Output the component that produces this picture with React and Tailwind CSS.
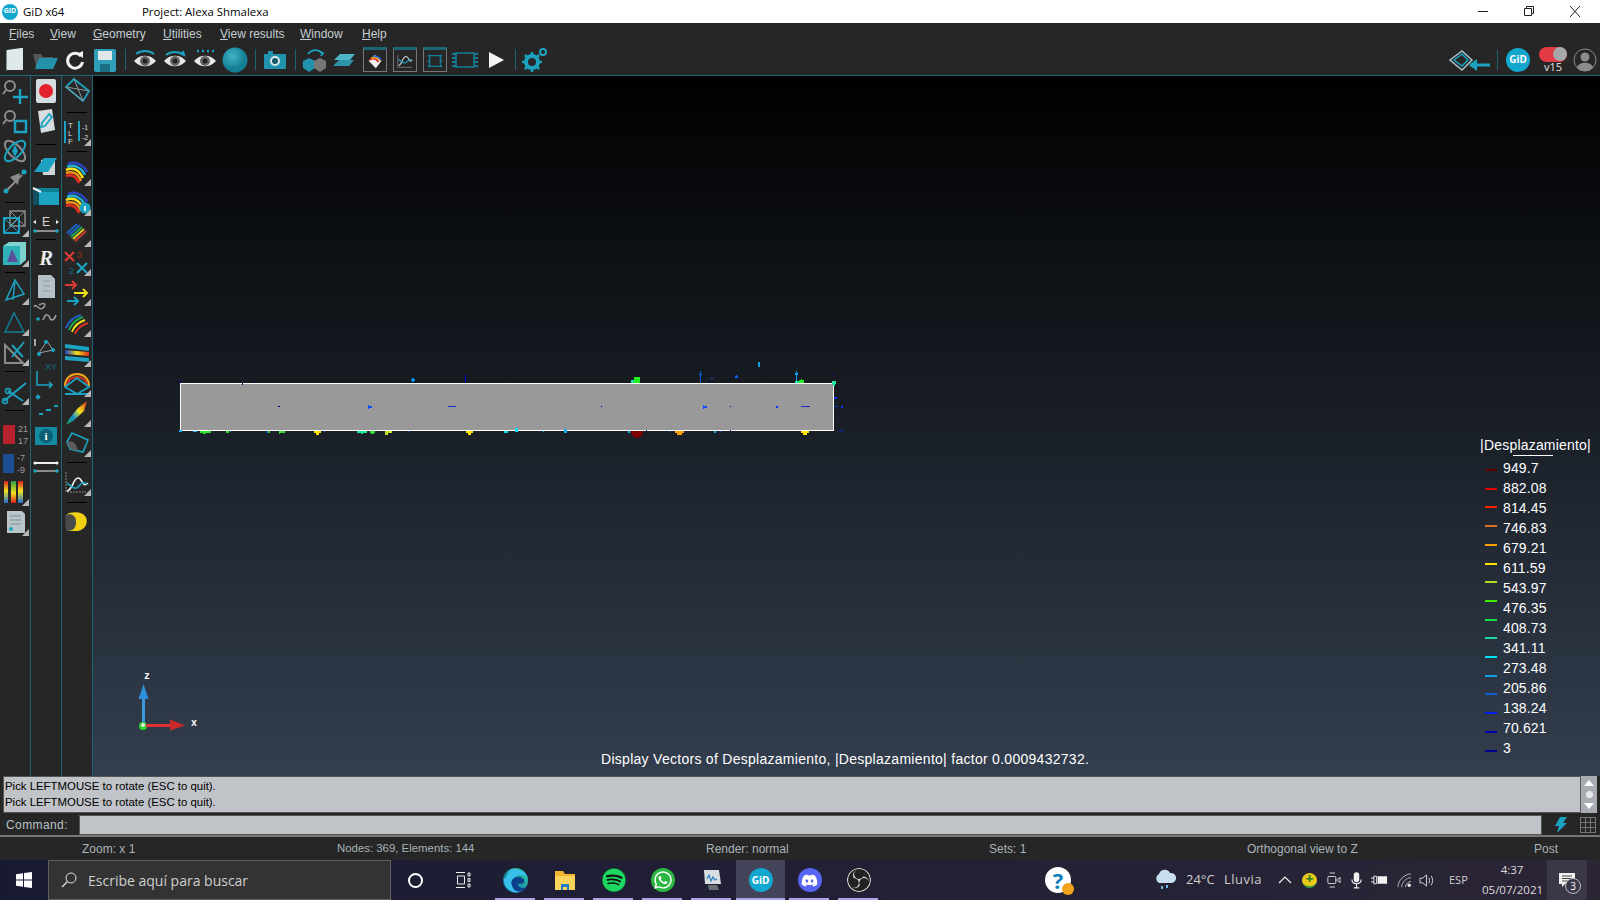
import React from 'react';
import { FaSpotify, FaWhatsapp, FaDiscord } from 'react-icons/fa';
import { SiObsstudio } from 'react-icons/si';

const TEAL = '#1ba3c1';
const GRAY = '#8c8c8c';

// 30x30 icon frame, corner = little grey flyout triangle
const Ic = ({ children, corner }) => (
  <svg viewBox="0 0 30 30" className="w-[30px] h-[30px]" fill="none">
    {children}
    {corner && <path d="M29 22v7h-7z" fill="#b9b9b9" />}
  </svg>
);

const Sep = ({ className }) => (
  <div className={`flex items-center justify-center ${className}`}>
    <div className="w-[20px] h-px bg-black" />
  </div>
);

const Tool = ({ className = 'h-[30px]', children }) => (
  <div className={`flex items-center justify-center ${className}`}>{children}</div>
);

const Rainbow = ({ info }) => (
  <>
    <path d="M4 9c8-7 17-4 22 6l-5 11c-4-7-10-9-17-6z" fill="#1d1d1d" />
    <path d="M6 7c7-3 15 0 19 8" stroke="#2a46c0" strokeWidth="2.6" />
    <path d="M5 10c7-3 14 0 18 8" stroke="#22b0d0" strokeWidth="2.6" />
    <path d="M4 13c7-3 13 0 17 8" stroke="#f4e21a" strokeWidth="2.6" />
    <path d="M4 16c6-2 12 0 15 8" stroke="#f0901a" strokeWidth="2.6" />
    <path d="M4 19c5-2 10 0 13 7" stroke="#e52a1f" strokeWidth="2.6" />
    {info && <circle cx="23" cy="21" r="5.5" fill={TEAL} />}
    {info && <path d="M23 19v5" stroke="#fff" strokeWidth="1.6" />}
  </>
);

const column1 = [
  ['t', 'h-[30px]', <Ic key="a"><circle cx="10" cy="10" r="5" stroke={GRAY} strokeWidth="2" /><path d="M6 14l-3 4" stroke={GRAY} strokeWidth="2" /><path d="M20 13v15M13 21h15" stroke={TEAL} strokeWidth="2.5" /></Ic>],
  ['t', 'h-[30px]', <Ic key="b"><circle cx="10" cy="10" r="5" stroke={GRAY} strokeWidth="2" /><path d="M6 14l-3 4" stroke={GRAY} strokeWidth="2" /><rect x="15" y="15" width="11" height="11" stroke={TEAL} strokeWidth="2.5" /></Ic>],
  ['t', 'h-[30px]', <Ic key="c"><ellipse cx="15" cy="15" rx="13" ry="6" transform="rotate(45 15 15)" stroke={GRAY} strokeWidth="2" /><ellipse cx="15" cy="15" rx="13" ry="6" transform="rotate(-45 15 15)" stroke={TEAL} strokeWidth="2" /><path d="M15 9l3 6-3 6-3-6z" fill={TEAL} /></Ic>],
  ['t', 'h-[30px]', <Ic key="d"><path d="M6 25L22 9" stroke={GRAY} strokeWidth="2" /><path d="M20 7l-10 4 8 8z" fill={GRAY} /><circle cx="24" cy="6" r="2.5" fill={TEAL} /><circle cx="6" cy="25" r="2.5" fill={TEAL} /></Ic>],
  ['s', 'h-[12px]'],
  ['t', 'h-[30px]', <Ic key="e" corner><rect x="10" y="3" width="15" height="15" stroke={GRAY} strokeWidth="1.5" /><path d="M10 3l15 15M25 3L10 18" stroke={GRAY} /><rect x="4" y="10" width="15" height="15" stroke={TEAL} strokeWidth="2" /><path d="M4 10l15 15M19 10L4 25" stroke={TEAL} /></Ic>],
  ['t', 'h-[30px]', <Ic key="f" corner><path d="M3 8l6-4h17v18l-6 5H3z" fill="#7fd2cf" /><path d="M3 8h17v19H3z" fill="#2fb1b8" /><path d="M12 11l6 13H7z" fill="#5b4f9e" /></Ic>],
  ['s', 'h-[8px]'],
  ['t', 'h-[30px]', <Ic key="g" corner><path d="M6 24L15 4l9 14-18 6 9-20M15 4l-2 20" stroke={TEAL} strokeWidth="1.5" /></Ic>],
  ['t', 'h-[30px] mt-[1px]', <Ic key="h" corner><path d="M5 25L14 6l10 19z" stroke="#127e96" strokeWidth="1.5" /></Ic>],
  ['t', 'h-[30px]', <Ic key="i" corner><path d="M5 26V8l18 18z" stroke={GRAY} strokeWidth="2" /><path d="M12 20L24 5M12 8l11 12" stroke={TEAL} strokeWidth="2" /></Ic>],
  ['s', 'h-[9px]'],
  ['t', 'h-[30px]', <Ic key="j" corner><path d="M4 25L26 7M8 15l15 10" stroke={TEAL} strokeWidth="2" /><circle cx="5" cy="25" r="2.5" stroke={TEAL} strokeWidth="1.5" /><circle cx="8" cy="15" r="2.5" stroke={TEAL} strokeWidth="1.5" /></Ic>],
  ['s', 'h-[8px]'],
  ['t', 'h-[31px] mt-[5px]', <div key="k" className="w-[30px] flex items-center h-full"><div className="w-[12px] h-[19px] ml-[3px] bg-[#b7232c]" /><div className="ml-[3px] text-[9px] leading-[12px] text-[#9a9a9a] font-['Liberation_Sans',sans-serif]">21<br />17</div></div>],
  ['t', 'h-[27px]', <div key="l" className="w-[30px] flex items-center h-full"><div className="w-[11px] h-[19px] ml-[3px] bg-[#1d4f94]" /><div className="ml-[3px] text-[9px] leading-[12px] text-[#9a9a9a] font-['Liberation_Sans',sans-serif]">-7<br />-9</div></div>],
  ['t', 'h-[30px]', <Ic key="m" corner><defs><linearGradient id="rb" x1="0" y1="0" x2="0" y2="1"><stop offset="0" stopColor="#d71f24" /><stop offset=".45" stopColor="#f5e31c" /><stop offset="1" stopColor="#1f6cd8" /></linearGradient><linearGradient id="rb2" x1="0" y1="1" x2="0" y2="0"><stop offset="0" stopColor="#d71f24" /><stop offset=".45" stopColor="#f5e31c" /><stop offset="1" stopColor="#2a9c3f" /></linearGradient></defs><rect x="4" y="4" width="4" height="22" fill="url(#rb)" /><rect x="11" y="4" width="5" height="22" fill="url(#rb2)" /><rect x="18" y="4" width="5" height="22" fill="url(#rb)" /></Ic>],
  ['t', 'h-[30px]', <Ic key="n" corner><path d="M7 4h15l3 3v19H7z" fill="#b9c5c9" /><path d="M10 9h11M10 13h11M10 17h11" stroke="#7f8f95" /><circle cx="11" cy="22" r="2" fill={TEAL} /></Ic>],
];

const column2 = [
  ['t', 'h-[30px]', <Ic key="a"><rect x="5" y="3" width="20" height="24" rx="2" fill="#d6dde0" /><circle cx="15" cy="15" r="7" fill="#e3222e" /></Ic>],
  ['t', 'h-[30px]', <Ic key="b"><path d="M7 5l14-2 3 21-14 3z" fill="#d6dde0" /><path d="M18 8l3 3-7 9-4 1 1-4z" stroke={TEAL} strokeWidth="1.8" /></Ic>],
  ['s', 'h-[16px]'],
  ['t', 'h-[24px]', <Ic key="c"><path d="M10 11l14-2v17H12z" fill="#cdd5d8" /><path d="M3 23l10-14h13l-9 14z" fill={TEAL} /></Ic>],
  ['t', 'h-[40px]', <Ic key="d"><rect x="2" y="7" width="26" height="17" fill="#0f7f96" /><rect x="8" y="11" width="20" height="13" fill={TEAL} /><path d="M2 7v17h6V11z" fill="#12505f" /><path d="M2 7l8 4" stroke="#f1f1f1" strokeWidth="2" /></Ic>],
  ['t', 'h-[20px]', <Ic key="e"><path d="M2 11l3-2v4zM28 11l-3-2v4z" fill="#f0f0f0" /><text x="11" y="15" fontSize="12" fill="#d8d8d8" fontFamily="Liberation Sans">E</text><path d="M4 20h22" stroke="#8e8e8e" strokeWidth="2" /><circle cx="4" cy="20" r="1.8" fill={TEAL} /><circle cx="26" cy="20" r="1.8" fill={TEAL} /></Ic>],
  ['s', 'h-[6px]'],
  ['t', 'h-[32px]', <div key="f" className="text-[20px] leading-none italic text-[#f4f4f4] font-['Liberation_Serif',serif] [text-shadow:1px_0_#1f7fe0,-1px_0_#e8a020]">R</div>],
  ['t', 'h-[24px]', <Ic key="g"><path d="M7 4h13l4 4v19H7z" fill="#b5c1c6" /><path d="M12 10h7M12 15h7M12 20h7" stroke="#8d9ca2" /></Ic>],
  ['t', 'h-[30px]', <Ic key="h"><path d="M3 9c2-5 5 5 9 1s1-6-4-3" stroke="#999" strokeWidth="1.5" /><circle cx="7" cy="21" r="1.8" fill={TEAL} /><path d="M12 22c3-8 6-5 7-2s4 3 6-3" stroke="#a5a5a5" strokeWidth="1.5" /></Ic>],
  ['t', 'h-[30px] mt-[3px]', <Ic key="i"><path d="M8 22l14-3-6-9-8 12" stroke="#a0a0a0" /><circle cx="8" cy="23" r="2" fill={TEAL} /><circle cx="22" cy="19" r="2" fill={TEAL} /><circle cx="15" cy="11" r="2" fill={TEAL} /><path d="M4 8v7" stroke="#d0d0d0" strokeWidth="1.5" /></Ic>],
  ['t', 'h-[30px]', <Ic key="j"><path d="M6 10v14h14M18 21l3 3-3 3" stroke={TEAL} strokeWidth="1.6" /><text x="14" y="9" fontSize="9" fill="#126d82" fontFamily="Liberation Sans">XY</text></Ic>],
  ['t', 'h-[30px]', <Ic key="k"><rect x="5" y="4" width="4" height="4" fill={TEAL} transform="rotate(45 7 6)" /><path d="M8 23h4M15 19h5M23 15h4" stroke={TEAL} strokeWidth="2" /></Ic>],
  ['t', 'h-[30px]', <div key="l" className="w-[22px] h-[18px] bg-[#138ba3] flex items-center justify-center"><div className="w-[14px] h-[14px] rounded-full bg-[#0c5f73] text-white text-[11px] leading-[14px] font-bold text-center font-['Liberation_Serif',serif]">i</div></div>],
  ['t', 'h-[30px]', <Ic key="m"><path d="M4 12h22" stroke="#f0f0f0" strokeWidth="2" /><path d="M4 20h22" stroke="#8a8a8a" strokeWidth="2" /><circle cx="4" cy="20" r="1.8" fill={TEAL} /><circle cx="26" cy="20" r="1.8" fill={TEAL} /><circle cx="4" cy="12" r="1.5" fill="#fff" /><circle cx="26" cy="12" r="1.5" fill="#fff" /></Ic>],
];

const column3 = [
  ['t', 'h-[30px]', <Ic key="a"><path d="M4 11l8-8 15 12-6 10z" stroke={TEAL} strokeWidth="1.8" /><path d="M4 11l17 14M12 3l9 22M27 15L4 11" stroke="#8a9aa0" /></Ic>],
  ['s', 'h-[12px]'],
  ['t', 'h-[28px]', <Ic key="b" corner><path d="M3 4v22M17 4v20" stroke={TEAL} strokeWidth="2" /><text x="6" y="11" fontSize="8" fill="#ddd" fontFamily="Liberation Sans">T</text><text x="6" y="19" fontSize="8" fill="#ddd" fontFamily="Liberation Sans">L</text><text x="6" y="27" fontSize="8" fill="#ddd" fontFamily="Liberation Sans">F</text><text x="20" y="13" fontSize="7" fill="#ddd" fontFamily="Liberation Sans">-1</text><text x="20" y="23" fontSize="7" fill="#ddd" fontFamily="Liberation Sans">-2</text></Ic>],
  ['s', 'h-[11px]'],
  ['t', 'h-[30px]', <Ic key="c" corner><Rainbow /></Ic>],
  ['t', 'h-[30px]', <Ic key="d" corner><Rainbow info /></Ic>],
  ['t', 'h-[30px] mt-[1px]', <Ic key="e" corner><path d="M4 16L15 5l11 11-11 11z" fill="#2d2d2d" /><path d="M5 15L15 6M7 17l11-10" stroke="#1d5fc0" strokeWidth="2" /><path d="M9 19l11-10" stroke="#22a64a" strokeWidth="2" /><path d="M11 21l11-10" stroke="#d8c820" strokeWidth="2" /><path d="M13 23l11-10" stroke="#d0342a" strokeWidth="2" /></Ic>],
  ['t', 'h-[28px]', <Ic key="f" corner><path d="M3 5l9 9M12 5l-9 9" stroke="#d93a34" strokeWidth="2.2" /><text x="15" y="11" fontSize="9" fill="#9c2620" fontFamily="Liberation Sans">3</text><text x="7" y="27" fontSize="9" fill="#126d82" fontFamily="Liberation Sans">2</text><path d="M15 16l10 10M25 16L15 26" stroke={TEAL} strokeWidth="2.2" /></Ic>],
  ['t', 'h-[32px]', <Ic key="g" corner><path d="M3 8h11M10 4l4 4-4 4" stroke="#d93a34" strokeWidth="2" /><path d="M12 16h13M21 12l4 4-4 4" stroke="#f2e21a" strokeWidth="2" /><path d="M5 24h11M12 20l4 4-4 4" stroke={TEAL} strokeWidth="2" /></Ic>],
  ['t', 'h-[30px]', <Ic key="h" corner><path d="M4 20c3-7 7-11 15-13" stroke="#1d5fc0" strokeWidth="2" /><path d="M7 22c3-7 7-11 14-13" stroke="#22a64a" strokeWidth="2" /><path d="M10 24c2-6 7-10 13-12" stroke="#f2e21a" strokeWidth="2" /><path d="M13 26c2-5 6-9 13-11" stroke="#d0342a" strokeWidth="2" /></Ic>],
  ['t', 'h-[30px]', <Ic key="i" corner><defs><linearGradient id="hb"><stop offset="0" stopColor="#1b3fc7" /><stop offset=".5" stopColor="#f2e21a" /><stop offset="1" stopColor="#d92b20" /></linearGradient></defs><path d="M3 6l24 3v4L3 10z" fill={TEAL} /><path d="M3 12l24 2v4L3 16z" fill="url(#hb)" /><path d="M3 18l24 2v4L3 22z" fill={TEAL} /></Ic>],
  ['t', 'h-[30px]', <Ic key="j" corner><path d="M3 18c0-16 24-16 24 0" stroke="#f2a81a" strokeWidth="2" /><path d="M5 18c0-12 20-12 20 0" stroke="#d0342a" strokeWidth="2" /><path d="M3 19l12-9 12 9-12 7zM3 26h24" stroke={TEAL} strokeWidth="1.8" /></Ic>],
  ['t', 'h-[30px]', <Ic key="k" corner><defs><linearGradient id="br" x1="0" y1="1" x2="1" y2="0"><stop offset="0" stopColor="#17a23a" /><stop offset=".35" stopColor="#1b8fd0" /><stop offset=".6" stopColor="#f2e21a" /><stop offset="1" stopColor="#e02a1f" /></linearGradient></defs><path d="M4 27l3-6 9-11 9-7-3 10-11 10z" fill="url(#br)" /></Ic>],
  ['t', 'h-[30px]', <Ic key="l" corner><path d="M5 14l5-9 16 7-5 12-13-3z" stroke={TEAL} strokeWidth="1.6" /><path d="M5 14c5-2 9 0 11 9l-8-2z" fill="#5c5c5c" /></Ic>],
  ['s', 'h-[8px]'],
  ['t', 'h-[32px]', <Ic key="m" corner><path d="M4 5v20h20" stroke="#8a8a8a" strokeWidth="1" strokeDasharray="2 1" /><path d="M5 24c6-1 6-13 11-13s4 11 10 5" stroke="#f2f2f2" strokeWidth="1.6" /><path d="M5 16c5 4 8 7 11 4s4-6 9-3" stroke={TEAL} strokeWidth="1.6" /></Ic>],
  ['s', 'h-[8px]'],
  ['t', 'h-[32px]', <Ic key="n"><path d="M7 6c14-3 20 4 17 12-2 4-6 6-10 6H4V8z" fill="#f0d010" /><path d="M3 8c6-2 11 0 11 7s-4 9-10 9z" fill="#4a4a4a" /></Ic>],
];

const ToolColumn = ({ items }) => (
  <div className="flex flex-col w-[31px] border-r border-[#1d6477]">
    {items.map(([kind, cls, node], i) =>
      kind === 's' ? <Sep key={i} className={cls} /> : <Tool key={i} className={cls}>{node}</Tool>
    )}
  </div>
);

const TopSep = () => (
  <div className="w-[10px] flex items-center justify-center"><div className="w-px h-[21px] bg-[#1d6477]" /></div>
);

const Frame = ({ children }) => (
  <div className="w-[24px] h-[25px] mx-[3px] border border-[#777] border-t-[3px] border-t-[#1d6477] flex items-center justify-center">{children}</div>
);

const Eye = ({ arc }) => (
  <Ic>
    <path d="M4 16c6-7 16-7 22 0-6 7-16 7-22 0z" fill="#e8e8e8" />
    <circle cx="15" cy="16" r="5" fill="#666" />
    <circle cx="15" cy="16" r="2.5" fill="#222" />
    {arc}
  </Ic>
);

const TopBar = () => (
  <div className="flex items-center h-[30px] pb-[2px] bg-[#262626] border-b border-[#1d6477]">
    <Ic><path d="M7 5l14-2h2v22H7z" fill="#dfe8ea" /><path d="M7 5v20l-1 1V6z" fill="#7e9096" /></Ic>
    <Ic><path d="M3 9h8l2 3h10v3H9l-2 10z" fill="#555" /><path d="M9 13h19l-5 11H5z" fill="#2492ad" /></Ic>
    <Ic><path d="M21 11a7.500 7.500 0 1 0 1.500 6" stroke="#f2f2f2" strokeWidth="3" /><path d="M17 9l6-3 0 7z" fill="#f2f2f2" /></Ic>
    <Ic><rect x="4" y="4" width="22" height="23" rx="2" fill="#2f9fba" /><rect x="8" y="6" width="14" height="9" fill="#e2e8ea" /><rect x="10" y="19" width="10" height="8" fill="#1b6f84" /></Ic>
    <TopSep />
    <Eye arc={<path d="M6 9c5-4 13-4 18 0" stroke={TEAL} strokeWidth="2" />} />
    <Eye arc={<path d="M6 10c5-4 13-4 18 0m-4-2l4 2-1-4" stroke={TEAL} strokeWidth="2" />} />
    <Eye arc={<path d="M7 6h2M12 6h2M17 6h2M22 6h2" stroke={TEAL} strokeWidth="2.4" />} />
    <Ic><defs><radialGradient id="sph" cx=".4" cy=".35"><stop offset="0" stopColor="#41b4c6" /><stop offset="1" stopColor="#147f96" /></radialGradient></defs><circle cx="15" cy="15" r="12.5" fill="url(#sph)" /></Ic>
    <TopSep />
    <Ic><rect x="4" y="9" width="22" height="15" rx="1" fill="#2193ae" /><rect x="8" y="6" width="5" height="3" fill="#2193ae" /><circle cx="15" cy="16" r="5" fill="#dce6e8" /><circle cx="15" cy="16" r="3" fill="#145a6b" /></Ic>
    <TopSep />
    <Ic><path d="M3 16l6-3 6 3v7l-6 4-6-4z" fill="#2193ae" /><path d="M14 16l6-3 6 3v7l-6 4-6-4z" fill="#777" /><path d="M8 9c4-5 10-5 14-1m-3-2l4 2-2 3" stroke={TEAL} strokeWidth="1.8" /></Ic>
    <Ic><path d="M10 9h15l-5 6H4z" fill="#4db5c8" /><path d="M9 15h15l-5 6H3z" fill="#2f94aa" /></Ic>
    <Frame><svg viewBox="0 0 20 20" className="w-[18px] h-[18px]" fill="none"><path d="M3 10L10 3l7 7-6 8z" fill="#f1f1f1" /><path d="M4 9c3-3 7-2 10 2" stroke="#d92b20" strokeWidth="2" /><path d="M6 7c3-2 6-1 9 2" stroke="#f2a81a" strokeWidth="2" /><path d="M8 5c2-1 6 0 8 3" stroke="#2a66d8" strokeWidth="2" /></svg></Frame>
    <Frame><svg viewBox="0 0 20 20" className="w-[18px] h-[18px]" fill="none"><path d="M2 3v14h16" stroke="#777" /><path d="M3 15c4-1 4-10 8-10s3 8 7 4" stroke="#ddd" strokeWidth="1.2" /><path d="M3 8c4 3 6 6 9 3s3-3 6-2" stroke={TEAL} strokeWidth="1.2" /></svg></Frame>
    <Frame><svg viewBox="0 0 20 20" className="w-[18px] h-[18px]" fill="none"><path d="M4 4h12v12H4z" stroke="#127e96" strokeWidth="1.5" /><path d="M2 4h2M2 10h2M2 16h2M16 4h2M16 10h2M16 16h2" stroke="#127e96" strokeWidth="2" /></svg></Frame>
    <Ic><path d="M6 8h18v14H6z" stroke="#127e96" strokeWidth="1.6" /><path d="M2 9h4M2 13h4M2 17h4M2 21h4M24 9h4M24 13h4M24 17h4M24 21h4" stroke="#127e96" strokeWidth="2" /></Ic>
    <Ic><path d="M9 7l15 8-15 8z" fill="#f4f4f4" /></Ic>
    <TopSep />
    <Ic><circle cx="12" cy="17" r="6" stroke={TEAL} strokeWidth="4" /><path d="M12 7v3M12 24v3M2 17h3M19 17h3M5 10l2 2M17 22l2 2M5 24l2-2M17 12l2-2" stroke={TEAL} strokeWidth="2.5" /><circle cx="23" cy="7" r="3" stroke={TEAL} strokeWidth="2" /></Ic>
    <div className="ml-auto flex items-center">
      <svg viewBox="0 0 42 24" className="w-[42px] h-[24px]" fill="none">
        <path d="M1 12L13 3l10 9-10 10z" stroke="#a8c4ca" strokeWidth="1.5" />
        <path d="M5 12L13 6l6 6-6 6z" stroke={TEAL} strokeWidth="1.5" />
        <path d="M21 17h20" stroke={TEAL} strokeWidth="3" /><path d="M28 11l-8 6 8 6z" fill={TEAL} />
      </svg>
      <div className="w-px h-[20px] ml-[6px] bg-[#1d6477]" />
      <div className="w-[24px] h-[24px] ml-[8px] rounded-full bg-[#13a7cf] flex items-center justify-center text-white text-[10px] font-bold font-['Noto_Sans',sans-serif]">GiD</div>
      <div className="w-[28px] ml-[9px] flex flex-col items-center">
        <div className="w-[28px] h-[15px] rounded-full bg-[#e23b44] flex justify-end"><div className="w-[14px] h-[14px] rounded-full bg-[#a5a8ab]" /></div>
        <div className="text-[11px] leading-[10px] text-[#dcdcdc] font-['Noto_Sans',sans-serif]">v15</div>
      </div>
      <svg viewBox="0 0 24 24" className="w-[24px] h-[24px] ml-[6px] mr-[3px]" fill="none">
        <circle cx="12" cy="12" r="11" stroke="#8c8c8c" />
        <circle cx="12" cy="9" r="4.5" fill="#8c8c8c" /><path d="M4 20c1-7 15-7 16 0l-5 3H8z" fill="#8c8c8c" />
      </svg>
    </div>
  </div>
);

const menus = [
  ['F', 'iles', 'w-[41px]'],
  ['V', 'iew', 'w-[43px]'],
  ['G', 'eometry', 'w-[70px]'],
  ['U', 'tilities', 'w-[57px]'],
  ['V', 'iew results', 'w-[80px]'],
  ['W', 'indow', 'w-[62px]'],
  ['H', 'elp', 'w-[40px]'],
];

const legend = ['949.7', '882.08', '814.45', '746.83', '679.21', '611.59', '543.97', '476.35', '408.73', '341.11', '273.48', '205.86', '138.24', '70.621', '3'];
const legendLines = [
  [469, '#5c0000'], [488, '#e00000'], [506, '#ff2000'], [525, '#d87020'], [544, '#ffa000'], [563, '#ffe000'],
  [581, '#b0e020'], [600, '#40f000'], [619, '#10e040'], [637, '#20d8a0'], [656, '#00e0f0'], [675, '#10a0e0'],
  [693, '#1060d0'], [712, '#0020f0'], [731, '#0000b0'], [750, '#000090'],
];

// vector marks of the result, [x, y, w, h, colour] in page pixels
const marks = [
  [180, 380, 1, 3, '#0000a0'], [242, 383, 1, 2, '#000090'], [255, 382, 1, 1, '#000090'], [412, 378, 2, 4, '#0a8aee'], [411, 379, 4, 2, '#0a8aee'],
  [465, 375, 1, 8, '#0000d0'], [278, 406, 2, 1, '#0000b0'], [368, 405, 1, 4, '#0a50ff'], [368, 406, 4, 2, '#0a50ff'], [448, 406, 8, 1, '#1030c0'],
  [179, 430, 3, 2, '#10b0f0'], [193, 431, 4, 1, '#1ab0ff'], [200, 431, 11, 2, '#30e030'], [203, 433, 3, 1, '#30e030'], [226, 431, 3, 2, '#30e030'], [230, 431, 1, 1, '#1ab0ff'],
  [266, 431, 1, 2, '#1060f0'], [268, 431, 2, 2, '#30e030'], [279, 431, 6, 2, '#30e030'], [279, 433, 1, 1, '#30e030'], [314, 431, 7, 2, '#ffe000'], [316, 433, 3, 2, '#ffe000'], [324, 431, 1, 1, '#1060f0'],
  [357, 431, 10, 2, '#20e890'], [361, 433, 2, 1, '#20e890'], [370, 431, 5, 2, '#30e030'], [371, 433, 3, 1, '#30e030'], [385, 431, 7, 2, '#c0e020'], [385, 433, 3, 2, '#c0e020'], [408, 431, 1, 1, '#1060f0'],
  [466, 431, 7, 2, '#ffe000'], [468, 433, 3, 2, '#ffe000'], [504, 431, 4, 2, '#00e0f0'], [515, 428, 3, 4, '#00e0f0'], [543, 431, 1, 1, '#10b0f0'], [564, 429, 3, 4, '#10b0f0'],
  [634, 377, 6, 6, '#20f020'], [631, 380, 3, 3, '#20e8a0'], [700, 371, 1, 12, '#1060f0'], [699, 374, 3, 1, '#1060f0'], [711, 378, 2, 1, '#1060d0'], [708, 381, 1, 2, '#000090'], [735, 376, 3, 2, '#1060f0'], [736, 375, 1, 1, '#1060f0'],
  [758, 362, 2, 5, '#10a0e0'], [796, 371, 1, 12, '#10a0f0'], [795, 373, 3, 2, '#10a0f0'], [799, 380, 5, 3, '#20f020'], [801, 379, 1, 1, '#20f020'], [795, 381, 4, 2, '#20e8a0'],
  [832, 381, 4, 3, '#20e8a0'], [833, 384, 2, 2, '#20e8a0'], [601, 406, 1, 1, '#0000b0'], [703, 405, 1, 4, '#0a50ff'], [703, 406, 4, 2, '#0a50ff'], [730, 406, 1, 1, '#0000b0'], [776, 406, 2, 2, '#1030f0'], [801, 406, 9, 1, '#1030c0'],
  [834, 397, 3, 2, '#1030f0'], [841, 406, 2, 2, '#1030f0'], [834, 406, 4, 1, '#1030c0'], [839, 430, 4, 1, '#1030c0'], [833, 374, 1, 1, '#000090'],
  [628, 431, 2, 2, '#10c0f0'], [646, 430, 1, 1, '#000090'], [669, 431, 1, 1, '#1060f0'], [714, 431, 2, 2, '#10b0f0'], [720, 431, 1, 1, '#1060f0'], [730, 430, 1, 1, '#000090'],
  [675, 431, 9, 2, '#ffa000'], [677, 433, 5, 2, '#ffa000'], [801, 431, 8, 2, '#ffe000'], [803, 433, 4, 2, '#ffe000'],
];

const Viewport = () => (
  <div className="relative flex-1 bg-linear-to-b/srgb from-black to-[#333e4e] font-['Liberation_Sans',sans-serif] text-white">
    <svg viewBox="93 76 1507 700" className="absolute left-0 top-0 w-[1507px] h-[700px]" fill="none">
      <rect x="180.5" y="383.5" width="653" height="47" fill="#999999" stroke="#ffffff" />
      {marks.map(([x, y, w, h, c], i) => <rect key={i} x={x} y={y} width={w} height={h} fill={c} />)}
      <path d="M631 431h12c0 4-3 7-6 7s-6-3-6-7z" fill="#800000" />
      {/* axes */}
      <path d="M142 725v-30h3v30z" fill="#3a9bdc" />
      <path d="M143.5 684l5 15h-10z" fill="#2f8fd6" />
      <circle cx="143" cy="726" r="4" fill="#30d030" />
      <circle cx="143" cy="725" r="2" fill="#e8e8e8" />
      <path d="M146 724h24v3h-24z" fill="#e03030" />
      <path d="M185 725.5l-15 5v-11z" fill="#c82a2a" />
      <text x="144" y="679" fontSize="10" fontWeight="700" fill="#fff" fontFamily="Liberation Mono">z</text>
      <text x="191" y="726" fontSize="10" fontWeight="700" fill="#fff" fontFamily="Liberation Mono">x</text>
    </svg>
    {/* legend */}
    <div className="absolute left-[1386px] top-[360px] w-[113px] text-[14px] leading-[18px] tracking-[.2px] text-center whitespace-nowrap">|Desplazamiento|</div>
    <div className="absolute left-[1420px] top-[379px] w-[40px] h-px bg-white" />
    {legendLines.map(([y, c]) => (
      <svg key={y} viewBox="0 0 12 2" className="absolute left-[1392px] w-[12px] h-[2px]" style={{ top: y - 76 }}><rect width="12" height="2" fill={c} /></svg>
    ))}
    <div className="absolute left-[1410px] top-[382px] flex flex-col text-[14px] leading-[20px] tracking-[.15px]">
      {legend.map((v) => <div key={v}>{v}</div>)}
    </div>
    <div className="absolute left-[508px] top-[674px] text-[14px] leading-[18px] tracking-[.28px] whitespace-nowrap">Display Vectors of Desplazamiento, |Desplazamiento| factor 0.0009432732.</div>
  </div>
);

const MessageArea = () => (
  <div className="h-[38px] flex bg-[#262626] pl-[3px] font-['Liberation_Sans',sans-serif]">
    <div className="w-[1578px] h-[37px] bg-[#c0c3c8] border border-[#555] px-[1px] py-[1px] text-[11.4px] leading-[16px] text-black">
      <div>Pick LEFTMOUSE to rotate (ESC to quit).</div>
      <div>Pick LEFTMOUSE to rotate (ESC to quit).</div>
    </div>
    <div className="w-[16px] h-[37px] bg-[#a9acb2] flex flex-col items-center justify-around py-[2px]">
      <svg viewBox="0 0 10 6" className="w-[10px] h-[6px]"><path d="M5 0l5 6H0z" fill="#fff" /></svg>
      <div className="w-[7px] h-[7px] rounded-full bg-[#e6e8ea]" />
      <svg viewBox="0 0 10 6" className="w-[10px] h-[6px]"><path d="M0 0h10L5 6z" fill="#fff" /></svg>
    </div>
  </div>
);

const CommandRow = () => (
  <div className="h-[23px] flex items-center bg-[#262626] border-b-2 border-[#777] font-['Liberation_Sans',sans-serif] text-[12px] text-[#b8c2c6]">
    <div className="w-[79px] pl-[6px] tracking-[.4px]">Command:</div>
    <div className="w-[1463px] h-[20px] bg-[#c0c3c8] border border-[#555]" />
    <svg viewBox="0 0 12 16" className="w-[12px] h-[16px] ml-[13px]"><path d="M5 0h7L8 6h4L2 16l2-7H0z" fill={TEAL} /></svg>
    <svg viewBox="0 0 16 16" className="w-[16px] h-[16px] ml-[13px]" fill="none"><path d="M.5.5h15v15H.5zM5.5.5v15M10.500.5v15M.5 5.5h15M.5 10.500h15" stroke="#777" /></svg>
  </div>
);

const StatusBar = () => (
  <div className="h-[23px] flex items-center bg-[#262626] font-['Liberation_Sans',sans-serif] text-[12px] text-[#a9b3b8] whitespace-nowrap">
    <div className="w-[337px] pl-[82px]">Zoom: x 1</div>
    <div className="w-[369px] text-[11.4px]">Nodes: 369, Elements: 144</div>
    <div className="w-[283px]">Render: normal</div>
    <div className="w-[258px]">Sets: 1</div>
    <div className="w-[287px]">Orthogonal view to Z</div>
    <div>Post</div>
  </div>
);

const Slot = ({ children, active }) => (
  <div className={`relative w-[49px] h-[40px] flex items-center justify-center ${active ? 'bg-[#43445a]' : ''}`}>
    {children}
    <div className={`absolute bottom-0 h-[2px] bg-[#a9a4e8] ${active ? 'left-0 right-0' : 'left-[4px] right-[5px]'}`} />
  </div>
);

const Taskbar = () => (
  <div className="h-[40px] flex items-center bg-gradient-to-r from-[#181a34] to-[#2b2536] text-[#e2e2e2] font-['Open_Sans',sans-serif]">
    <div className="w-[48px] flex justify-center">
      <svg viewBox="0 0 16 16" className="w-[16px] h-[16px]"><path d="M0 2.2l7-1v6.300H0zM8 1l8-1v7.500H8zM0 8.500h7v6.300l-7-1zM8 8.500h8V16l-8-1z" fill="#fff" /></svg>
    </div>
    <div className="w-[343px] h-[40px] flex items-center bg-[#333333] border border-[#5f5f5f] text-[14px] text-[#cfcfcf]">
      <svg viewBox="0 0 16 16" className="w-[16px] h-[16px] ml-[12px] mr-[11px]" fill="none"><circle cx="10" cy="6" r="5" stroke="#e2e2e2" /><path d="M6.5 9.5L1 15" stroke="#e2e2e2" strokeWidth="1.2" /></svg>
      Escribe aquí para buscar
    </div>
    <div className="w-[48px] flex justify-center"><div className="w-[15px] h-[15px] rounded-full border-2 border-white" /></div>
    <div className="w-[48px] flex justify-center">
      <svg viewBox="0 0 16 16" className="w-[16px] h-[16px]" fill="none"><path d="M1 .5h9M1 15.500h9M2.500 4h7v8h-7zM13 1h2v3h-2zM13 6.500h2v3h-2zM13 12h2v3h-2z" stroke="#f0f0f0" /></svg>
    </div>
    <div className="w-[4px]" />
    <Slot>
      <svg viewBox="0 0 24 24" className="w-[25px] h-[25px]"><defs><linearGradient id="edge" x1="0" y1="1" x2="1" y2="0"><stop offset="0" stopColor="#0c59a4" /><stop offset="1" stopColor="#2dd4a0" /></linearGradient></defs><circle cx="12" cy="12" r="12" fill="url(#edge)" /><path d="M24 13c0-5-5-7-9-6-6 1-7 8-3 11 3 2 7 2 10-1-2 4-7 7-12 6-7-2-10-8-9-13 3 1 3-9 9-9 9 0 14 5 14 12z" fill="#39c0ea" /><path d="M8 14c0-5 7-7 11-4 2 1 2 5-1 5h-4c0 4 6 5 9 3-3 5-10 6-13 2-1-2-2-4-2-6z" fill="#0e3f8f" /></svg>
    </Slot>
    <Slot>
      <svg viewBox="0 0 24 24" className="w-[24px] h-[24px]"><path d="M2 3h8l2 3h10v3H2z" fill="#f2b632" /><rect x="2" y="8" width="20" height="14" fill="#f9d45c" /><path d="M8 22v-6h8v6h-2v-3h-4v3z" fill="#1c7fc4" /></svg>
    </Slot>
    <Slot><div className="w-[24px] h-[24px] rounded-full bg-[#1ed760] flex items-center justify-center"><FaSpotify className="w-[24px] h-[24px] text-[#1ed760] bg-[#111] rounded-full" /></div></Slot>
    <Slot><div className="w-[24px] h-[24px] rounded-full bg-[#2bb741] flex items-center justify-center"><FaWhatsapp className="w-[20px] h-[20px] text-white" /></div></Slot>
    <Slot>
      <svg viewBox="0 0 24 24" className="w-[24px] h-[24px]" fill="none"><path d="M4 2h15l2 14H5z" fill="#d8dde2" /><path d="M7 11l2-4 2 6 2-4 2 3 2-1" stroke="#2f7fc0" strokeWidth="1.2" /><path d="M8 17h9l2 5H9z" fill="#6a6f76" /></svg>
    </Slot>
    <Slot active>
      <div className="w-[24px] h-[24px] rounded-full bg-[#13a7cf] flex items-center justify-center text-white text-[10px] font-bold font-['Noto_Sans',sans-serif]">GiD</div>
    </Slot>
    <Slot><div className="w-[24px] h-[24px] rounded-full bg-[#5865f2] flex items-center justify-center"><FaDiscord className="w-[17px] h-[17px] text-white" /></div></Slot>
    <Slot><SiObsstudio className="w-[24px] h-[24px] text-[#dcdcdc] bg-[#222] rounded-full" /></Slot>
    <div className="ml-auto flex items-center h-[40px] text-[#cfcfcf] text-[12px] whitespace-nowrap">
      <div className="relative w-[26px] h-[26px] rounded-full bg-white flex items-center justify-center text-[#0f7fb8] text-[22px] font-bold mr-[82px]">
        ?
        <div className="absolute right-[-3px] bottom-[-2px] w-[12px] h-[12px] rounded-full bg-[#f3a21d]" />
      </div>
      <svg viewBox="0 0 24 24" className="w-[24px] h-[24px] mr-[9px]" fill="none"><path d="M6 15a5 5 0 0 1 0-9 6 6 0 0 1 11-1 5 5 0 0 1 2 10z" fill="#c9def0" /><path d="M9 18v3M14 17v3" stroke="#6fb4e8" strokeWidth="2" /></svg>
      <div className="w-[30px] text-[13px]">24°C</div>
      <div className="w-[48px] ml-[8px] text-[13px] tracking-[.5px]">Lluvia</div>
      <svg viewBox="0 0 14 8" className="w-[14px] h-[8px] ml-[6px]" fill="none"><path d="M1 7l6-6 6 6" stroke="#f0f0f0" strokeWidth="1.2" /></svg>
      <div className="w-[15px] h-[15px] ml-[10px] rounded-full bg-[#e8c81a] border-b-2 border-[#3a9c3a] flex items-center justify-center text-[#1f7a2a] text-[14px] font-bold leading-none">+</div>
      <svg viewBox="0 0 16 18" className="w-[14px] h-[16px] ml-[10px]" fill="none"><path d="M3 1h6M3 17h6" stroke="#e6e6e6" /><rect x="1" y="5" width="9" height="8" rx="1" stroke="#e6e6e6" /><path d="M11 9l4-3v6z" stroke="#e6e6e6" /></svg>
      <svg viewBox="0 0 12 18" className="w-[11px] h-[17px] ml-[10px]" fill="none"><rect x="3" y="0" width="6" height="11" rx="3" fill="#f0f0f0" /><path d="M1 8c0 6 10 6 10 0M6 13v4M3 17h6" stroke="#f0f0f0" strokeWidth="1.2" /></svg>
      <svg viewBox="0 0 18 12" className="w-[17px] h-[12px] ml-[9px]" fill="none"><path d="M0 4h3M0 8h3M3 2v8h3V2z" stroke="#f0f0f0" /><rect x="7" y="2" width="10" height="8" fill="#f0f0f0" /></svg>
      <svg viewBox="0 0 16 16" className="w-[15px] h-[15px] ml-[9px]" fill="none"><path d="M1 15C1 8 8 1 15 1M5 15c0-5 5-10 10-10M9 15c0-3 3-6 6-6" stroke="#bdbdbd" /><circle cx="13" cy="13" r="1.8" fill="#f0f0f0" /></svg>
      <svg viewBox="0 0 16 16" className="w-[15px] h-[15px] ml-[7px]" fill="none"><path d="M1 5.500h3L8 2v12l-4-3.500H1zM10.500 5c1 2 1 4 0 6M13 3c2 3 2 7 0 10" stroke="#d8d8d8" /></svg>
      <div className="w-[20px] ml-[15px] text-[11px]">ESP</div>
      <div className="w-[60px] ml-[13px] text-center text-[11.5px] leading-[20px] text-[#dcdcdc]">4:37<br />05/07/2021</div>
      <div className="w-[40px] h-[40px] ml-[5px] mr-[13px] bg-[#3a3748] flex items-center justify-center relative">
        <svg viewBox="0 0 16 16" className="w-[16px] h-[16px]"><path d="M0 1h16v11H6l-3 3v-3H0z" fill="#f0f0f0" /><path d="M3 4h10M3 6.500h10M3 9h7" stroke="#444" /></svg>
        <div className="absolute right-[6px] bottom-[6px] w-[16px] h-[16px] rounded-full bg-[#3a3748] border border-[#bbb] text-[10px] leading-[14px] text-center text-white">3</div>
      </div>
    </div>
  </div>
);

const App = () => (
  <div className="w-[1600px] h-[900px] flex flex-col overflow-hidden bg-[#262626]">
    {/* Title bar */}
    <div className="h-[23px] flex items-center bg-white text-[11.4px] text-black font-['Open_Sans',sans-serif]">
      <div className="w-[16px] h-[16px] ml-[2px] rounded-full bg-[#13a7cf] flex items-center justify-center text-white text-[7px] font-bold">GiD</div>
      <div className="w-[119px] ml-[5px]">GiD x64</div>
      <div>Project: Alexa Shmalexa</div>
      <div className="ml-auto flex items-center">
        <svg viewBox="0 0 46 23" className="w-[46px] h-[23px]" fill="none"><path d="M18 11.5h10" stroke="#222" /></svg>
        <svg viewBox="0 0 46 23" className="w-[46px] h-[23px]" fill="none"><path d="M18.5 8.500h7v7h-7zM20.500 8.500v-2h7v7h-2" stroke="#222" /></svg>
        <svg viewBox="0 0 46 23" className="w-[46px] h-[23px] mr-[2px]" fill="none"><path d="M18 6l10 11M28 6L18 17" stroke="#222" /></svg>
      </div>
    </div>
    {/* Menu */}
    <div className="h-[23px] flex items-center pl-[9px] pb-[1px] bg-[#262626] text-[12px] text-[#c4ced2] font-['Liberation_Sans',sans-serif]">
      {menus.map(([u, rest, w]) => (
        <div key={w} className={w}><span className="underline">{u}</span>{rest}</div>
      ))}
    </div>
    <TopBar />
    <div className="flex h-[700px]">
      <ToolColumn items={column1} />
      <ToolColumn items={column2} />
      <ToolColumn items={column3} />
      <Viewport />
    </div>
    <MessageArea />
    <CommandRow />
    <StatusBar />
    <Taskbar />
  </div>
);

export default App;
